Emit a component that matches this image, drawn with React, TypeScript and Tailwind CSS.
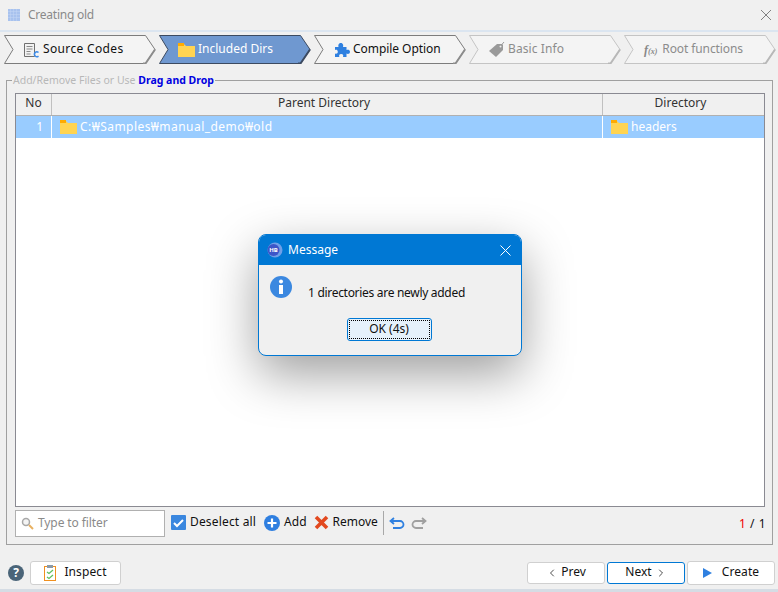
import { ChevronLeft, ChevronRight } from "lucide-react";

const FONT = "font-['Noto_Sans','Noto_Sans_CJK_KR',sans-serif]";

const Folder = () => (
  <svg width="17" height="14" viewBox="0 0 17 14" className="shrink-0">
    <path d="M0 1h6l2 2h9v11H0z" fill="#ffd452" />
    <path d="M0 0h6v3H0z" fill="#ffab00" />
  </svg>
);

const SourceIcon = () => (
  <svg width="16" height="16" viewBox="0 0 16 16" fill="none" className="shrink-0">
    <path d="M.5 1.500h10v13H.5z" fill="#f2f2f2" stroke="#707070" />
    <path d="M2.500 4.500h6M2.500 7h6M2.500 9.500h4M2.500 12h4" stroke="#8a8a8a" />
    <path d="M14.500 10.500a2.400 2.400 0 1 0 0 3.600" stroke="#3d8be8" strokeWidth="1.500" />
  </svg>
);

const PuzzleIcon = () => (
  <svg width="16" height="16" viewBox="0 0 16 16" className="shrink-0">
    <path
      d="M1 5h3.600C4 3.600 4.400 1 6.800 1s2.800 2.600 2.200 4H12.500v3c1.300-.7 3.500-.4 3.500 1.800s-2.200 2.500-3.500 1.800V15H9c.6-1.300.3-3-1.800-3s-2.400 1.700-1.800 3H1v-3.500c1.300.6 2.800.2 2.800-1.700S2.300 7.400 1 8z"
      fill="#2f80e0"
    />
  </svg>
);

const TagIcon = () => (
  <svg width="16" height="16" viewBox="0 0 16 16" className="shrink-0">
    <path d="M0 9 8 2h5l1 1v5l-7 7z" fill="#9a9a9a" />
    <circle cx="11.500" cy="4.500" r="1" fill="#f0f0f0" />
    <path d="M12 3.500 15 0" stroke="#9a9a9a" />
  </svg>
);

const tabs = [
  { label: "Source Codes", icon: <SourceIcon />, state: "normal", pad: "pl-[20px]", track: "tracking-[0.35px]" },
  { label: "Included Dirs", icon: <Folder />, state: "active", pad: "pl-[19px]", track: "tracking-normal" },
  { label: "Compile Option", icon: <PuzzleIcon />, state: "normal", pad: "pl-[20px]", track: "tracking-[-0.05px]" },
  { label: "Basic Info", icon: <TagIcon />, state: "disabled", pad: "pl-[20px]", track: "tracking-[0.1px]" },
  {
    label: "Root functions",
    icon: (
      <span className="mr-[2px] font-['Liberation_Serif',serif] text-[12px] font-bold italic leading-none text-[#888]">
        f<span className="text-[8px]">(x)</span>
      </span>
    ),
    state: "disabled",
    pad: "pl-[20px]",
    track: "tracking-[-0.1px]",
  },
];

const Tab = ({ tab }: { tab: (typeof tabs)[number] }) => {
  const active = tab.state === "active";
  const disabled = tab.state === "disabled";
  const line = active ? "#3c4a60" : disabled ? "#c4c4c4" : "#7c7c7c";
  const shade = disabled ? "#b8b8b8" : active ? "#3c4a60" : "#8c8c8c";
  return (
    <div
      className={`relative flex h-[29px] w-[152px] items-center ${tab.pad} text-[12px] ${
        active ? "text-white" : disabled ? "text-[#8c8c8c]" : "text-[#111]"
      }`}
    >
      <svg width="152" height="29" viewBox="0 0 152 29" fill="none" className="absolute inset-0">
        <path
          d="M.5.500H141.500L151 14.500 141.500 28.500H.5L9 14.500z"
          fill={active ? "#6f98d0" : "#f4f4f4"}
          stroke={line}
        />
        <path d="M151 14.500 141.500 28.500h-2.500" stroke={shade} strokeWidth="2" />
      </svg>
      <span className="relative flex items-center gap-[3px]">
        {tab.icon}
        <span className={`pb-[2px] ${tab.track}`}>{tab.label}</span>
      </span>
    </div>
  );
};

const Button = ({
  children,
  className,
}: {
  children: React.ReactNode;
  className: string;
}) => (
  <div
    className={`flex items-center justify-center rounded-[3px] border bg-white text-[12px] text-[#111] ${className}`}
  >
    {children}
  </div>
);

export default function App() {
  return (
    <div
      className={`${FONT} relative flex h-[592px] w-[778px] flex-col overflow-hidden bg-[#f0f0f0]`}
    >
      {/* title bar */}
      <div className="flex h-[32px] shrink-0 items-center border-b-2 border-[#dbe5f0] pl-[8px] pr-[6px]">
        <svg width="12" height="12" viewBox="0 0 12 12" fill="#a8c2ee" className="shrink-0">
          <rect width="12" height="12" fill="#c4d6f4" />
          <path d="M0 0h2.500v2.500H0zM3 0h2.500v2.500H3zM6 0h2.500v2.500H6zM9 0h3v2.500H9zM0 3h2.500v2.500H0zM3 3h2.500v2.500H3zM6 3h2.500v2.500H6zM9 3h3v2.500H9zM0 6h2.500v2.500H0zM3 6h2.500v2.500H3zM6 6h2.500v2.500H6zM9 6h3v2.500H9zM0 9h2.500v3H0zM3 9h2.500v3H3zM6 9h2.500v3H6zM9 9h3v3H9z" />
        </svg>
        <span className="ml-[8px] text-[12px] tracking-[-0.25px] text-[#8a8a8a]">Creating old</span>
        <svg width="12" height="12" viewBox="0 0 12 12" stroke="#808080" className="ml-auto">
          <path d="M1 1l10 10M11 1 1 11" />
        </svg>
      </div>

      {/* wizard steps */}
      <div className="mt-[3px] flex shrink-0 gap-[3px] pl-[4px]">
        {tabs.map((tab) => (
          <Tab key={tab.label} tab={tab} />
        ))}
      </div>

      {/* group box */}
      <fieldset className="mx-[6px] mt-[9px] flex h-[472px] w-[767px] flex-col border border-[#a0a0a0] pb-[6px] pl-[8px] pr-[7px] pt-[6px]">
        <legend className="ml-[-3px] h-[14px] px-px text-[10.500px] font-normal leading-[14px] text-[#b8b8b8]">
          Add/Remove Files or Use{" "}
          <span className="font-bold text-[#0000e0]">Drag and Drop</span>
        </legend>

        {/* table */}
        <div className="flex h-[414px] flex-col border border-[#8a8a92] bg-white text-[12px]">
          <div className="flex h-[22px] shrink-0 border-b border-[#b0b0b0] bg-[#f0f0f0] text-[#333]">
            <div className="flex w-[36px] items-center justify-center border-r border-[#c0c0c0] pb-[3px]">No</div>
            <div className="flex w-[551px] items-center justify-center border-r border-[#c0c0c0] pb-[3px] pr-[6px]">
              Parent Directory
            </div>
            <div className="flex flex-1 items-center justify-center pb-[3px] pr-[6px]">Directory</div>
          </div>
          <div className="flex h-[22px] shrink-0 bg-[#99ccff] text-white">
            <div className="flex w-[36px] items-center justify-end border-r border-white pr-[8px] pb-px">1</div>
            <div className="flex w-[551px] items-center gap-[3px] border-r border-white pl-[8px]">
              <Folder />
              <span className="pb-px tracking-[0.45px]">C:₩Samples₩manual_demo₩old</span>
            </div>
            <div className="flex flex-1 items-center gap-[3px] pl-[8px]">
              <Folder />
              <span className="pb-px">headers</span>
            </div>
          </div>
        </div>

        {/* toolbar */}
        <div className="mt-[3px] flex h-[27px] items-start text-[12px] text-[#111]">
          <div className="flex h-[27px] w-[150px] items-center border border-[#b0b0b0] bg-white pl-[5px]">
            <svg width="13" height="13" viewBox="0 0 13 13" fill="none" className="shrink-0">
              <circle cx="5" cy="5" r="3.500" fill="#f4f4f4" stroke="#a8a8a8" strokeWidth="1.500" />
              <path d="M8 8l4 4" stroke="#e8b060" strokeWidth="2" />
            </svg>
            <span className="ml-[4px] pb-[2px] tracking-[-0.1px] text-[#8a8a8a]">Type to filter</span>
          </div>
          <div className="flex h-[25px] flex-1 items-center">
            <svg width="15" height="15" viewBox="0 0 15 15" className="ml-[6px] shrink-0">
              <rect width="15" height="15" rx="1" fill="#3a87df" />
              <path d="M3 8l3 3 6-6" fill="none" stroke="#fff" strokeWidth="2" />
            </svg>
            <span className="ml-[4px] pb-px tracking-[0.17px]">Deselect all</span>
            <svg width="16" height="16" viewBox="0 0 16 16" className="ml-[8px] shrink-0">
              <circle cx="8" cy="8" r="8" fill="#2f7fe0" />
              <path d="M8 3.500v9M3.500 8h9" stroke="#fff" strokeWidth="2.200" />
            </svg>
            <span className="ml-[4px] pb-px">Add</span>
            <svg width="15" height="15" viewBox="0 0 15 15" className="ml-[7px] shrink-0">
              <path d="M2 2l11 11M13 2 2 13" stroke="#e2491f" strokeWidth="3.600" />
            </svg>
            <span className="ml-[4px] pb-px">Remove</span>
            <div className="ml-[5px] h-[24px] w-px bg-[#a8a8a8]" />
            <svg width="16" height="12" viewBox="0 0 16 12" fill="none" className="ml-[5px] shrink-0">
              <path d="M5 1 1.500 4 5 7M2 4h9a3.500 3.500 0 0 1 0 7H4" stroke="#2f80e0" strokeWidth="1.800" />
            </svg>
            <svg width="16" height="12" viewBox="0 0 16 12" fill="none" className="ml-[6px] shrink-0">
              <path d="M11 1l3.500 3L11 7M14 4H5a3.500 3.500 0 0 0 0 7h7" stroke="#a0a0a0" strokeWidth="1.800" />
            </svg>
            <span className="ml-auto mr-[-1px] mt-[3px] tracking-[0.5px]">
              <span className="text-[#f00000]">1</span> / 1
            </span>
          </div>
        </div>
      </fieldset>

      {/* footer */}
      <div className="mt-[16px] flex shrink-0 items-center pl-[8px] pr-[3px]">
        <div className="flex h-[16px] w-[16px] items-center justify-center rounded-full bg-[#4a6478] text-[12px] font-bold text-white">
          ?
        </div>
        <Button className="ml-[6px] h-[24px] w-[91px] gap-[8px] border-[#d0d0d0]">
          <svg width="12" height="16" viewBox="0 0 12 16" fill="none">
            <rect x=".5" y="1.500" width="11" height="14" fill="#fff" stroke="#f09020" />
            <rect x="3" y="0" width="6" height="3" fill="#8a9aa8" />
            <path d="M3 7l2 1.500L9 5M3 12l2 1.500L9 10" stroke="#60c060" strokeWidth="1.300" />
          </svg>
          <span className="pb-[2px] tracking-[0.1px]">Inspect</span>
        </Button>
        <Button className="ml-auto h-[22px] w-[78px] gap-[3px] border-[#d0d0d0]">
          <ChevronLeft size={12} strokeWidth={1.500} />
          <span className="pb-[2px]">Prev</span>
        </Button>
        <Button className="ml-[2px] h-[22px] w-[78px] gap-[3px] border-[#0078d4] bg-[#f8fbfe]">
          <span className="pb-[2px]">Next</span>
          <ChevronRight size={12} strokeWidth={1.500} />
        </Button>
        <Button className="ml-[2px] h-[24px] w-[88px] gap-[10px] border-[#d0d0d0]">
          <svg width="9" height="10" viewBox="0 0 9 10" fill="#2f80e0">
            <path d="M0 0l9 5-9 5z" />
          </svg>
          <span className="pb-[2px] tracking-[0.1px]">Create</span>
        </Button>
      </div>
      <div className="mt-auto h-[3px] shrink-0 bg-[#d5dce4]" />

      {/* message dialog */}
      <div className="absolute left-[258px] top-[234px] flex h-[122px] w-[264px] flex-col overflow-hidden rounded-[8px] border border-[#0078d4] bg-[#f0f0f0] shadow-[0_18px_50px_rgba(0,0,0,0.38)]">
        <div className="flex h-[30px] shrink-0 items-center bg-[#0078d4] pl-[8px] pr-[10px] text-white">
          <svg width="16" height="16" viewBox="0 0 16 16" className="shrink-0">
            <circle cx="8" cy="8" r="7.500" fill="#6f9fe8" />
            <circle cx="6.500" cy="8" r="6" fill="#3c55c8" />
            <text x="6.500" y="10" textAnchor="middle" fontSize="6" fontWeight="700" fill="#fff">
              HB
            </text>
          </svg>
          <span className="ml-[5px] pb-px text-[12px]">Message</span>
          <svg width="11" height="11" viewBox="0 0 11 11" stroke="#fff" className="ml-auto">
            <path d="M.5.500l10 10M10.500.500l-10 10" />
          </svg>
        </div>
        <div className="flex flex-1 flex-col">
          <div className="flex items-start pl-[11px] pt-[11px]">
            <svg width="22" height="22" viewBox="0 0 22 22" className="shrink-0">
              <circle cx="11" cy="11" r="11" fill="#3b88e0" />
              <circle cx="11" cy="5.500" r="2" fill="#fff" />
              <path d="M9 9h4v9H9z" fill="#fff" />
            </svg>
            <span className="ml-[16px] mt-[9px] text-[12px] leading-[16px] tracking-[-0.3px] text-[#111]">
              1 directories are newly added
            </span>
          </div>
          <div className="mt-[17px] flex justify-center">
            <div className="flex h-[23px] w-[85px] -translate-x-px items-center justify-center rounded-[3px] border border-[#0078d4] bg-[#e5f1fb] p-px">
              <div className="flex h-full w-full items-center justify-center border border-dotted border-black pb-px text-[12px] text-[#111]">
                OK (4s)
              </div>
            </div>
          </div>
        </div>
      </div>
    </div>
  );
}
